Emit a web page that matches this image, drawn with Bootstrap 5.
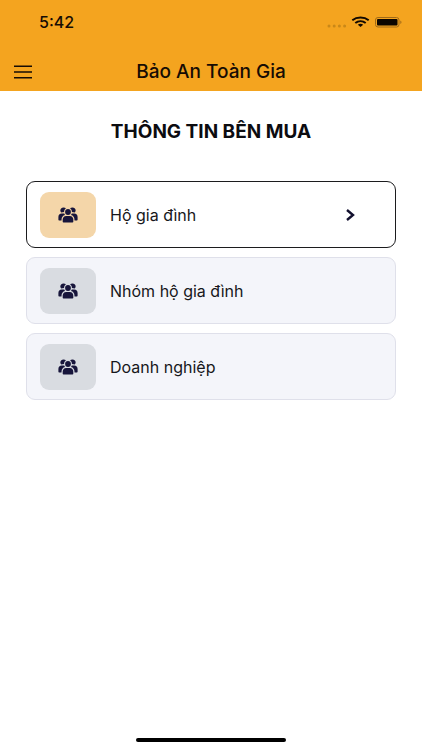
<!DOCTYPE html>
<html lang="vi">
<head>
<meta charset="utf-8">
<meta name="viewport" content="width=device-width, initial-scale=1">
<title>Bảo An Toàn Gia</title>
<link href="https://cdn.jsdelivr.net/npm/bootstrap@5.3.0/dist/css/bootstrap.min.css" rel="stylesheet">
<style>
body { font-family: Inter, "Liberation Sans", sans-serif; color: #0c0c10; background: #fff; }
.app-header { background: #f4a41f; color: #160c04; }
.status-bar { height: 44px; padding: 0 20px 0 39px; }
.status-time { font-size: 16px; line-height: 20px; font-weight: 500; }
.title-bar { display: grid; grid-template-columns: 32px 1fr 32px; height: 47px; padding: 8px 14px 0; }
.app-title { font-size: 19px; line-height: 24px; font-weight: 500; }
.menu-btn { color: #160c04; }
.section-title { font-size: 19px; line-height: 24px; font-weight: 700; margin: 29px 0 37px; }
.choices { padding: 0 26px; gap: 9px; }
.choice { height: 67px; padding: 0 40px 0 13px; gap: 14px; border: 1px solid #dfe0ea; border-radius: 9px; background: #f4f5fa; color: #17171b; font-size: 16px; line-height: 24px; }
.choice.selected { background: #fff; border-color: #1c1c1e; }
.choice-icon { width: 56px; height: 46px; border-radius: 9px; background: #d9dce1; color: #17153b; }
.selected .choice-icon { background: #f4d6a9; }
.home-bar { width: 150px; height: 4px; background: #000; margin-bottom: 8px; }
</style>
<script src="https://cdn.jsdelivr.net/npm/bootstrap@5.3.0/dist/js/bootstrap.bundle.min.js" defer></script>
</head>
<body class="d-flex flex-column min-vh-100">
<svg class="d-none" aria-hidden="true">
  <symbol id="people" viewBox="0 0 20 16">
    <g fill="currentColor">
      <circle cx="10" cy="5" r="2.900"/>
      <path d="M5.800 15.600c-.7 0-1.100-.4-1.100-1.100v-1.700c0-2.300 1.400-3.800 3.500-3.800h3.600c2.100 0 3.500 1.500 3.500 3.800v1.700c0 .7-.4 1.100-1.100 1.100z"/>
      <path d="M8 1.300C6.600.2 4.300.2 3.100 1.500c-1.100 1.200-1 2.900.1 3.900l2.900-.3C6 3.500 6.600 2.200 8 1.300z"/>
      <path d="M12 1.300c1.400-1.100 3.700-1.100 4.900.2 1.100 1.200 1 2.900-.1 3.900l-2.900-.3c.1-1.600-.5-2.900-1.900-3.800z"/>
      <path d="M3.700 6.600h2.500l.8 1.400c-2.200.5-3.500 2.300-3.500 4.900v.5H1.400c-.6 0-1-.4-1-1V9.900c0-2 1.300-3.300 3.300-3.300z"/>
      <path d="M16.300 6.600h-2.500L13 8c2.200.5 3.500 2.300 3.500 4.900v.5h2.100c.6 0 1-.4 1-1V9.900c0-2-1.300-3.300-3.300-3.300z"/>
    </g>
  </symbol>
</svg>
<header class="app-header">
  <div class="status-bar d-flex align-items-center justify-content-between">
    <span class="status-time">5:42</span>
    <svg width="76" height="14" viewBox="0 0 76 14" aria-hidden="true">
      <g fill="#c98818"><circle cx="3" cy="11" r="1.500"/><circle cx="8.200" cy="11" r="1.500"/><circle cx="13.400" cy="11" r="1.500"/><circle cx="18.600" cy="11" r="1.500"/></g>
      <g fill="none" stroke="#120900" stroke-width="2"><path d="M26.300 5.200c4.600-3.600 11.800-3.600 16.400 0"/><path d="M29.300 8c3-2.400 7.400-2.400 10.400 0"/></g>
      <path fill="#120900" d="M31.800 9.800c1.600-1.300 3.800-1.300 5.400 0l-2.700 2.300z"/>
      <rect x="49.500" y="2.500" width="23.500" height="9.500" rx="2.500" fill="none" stroke="#a06a18"/>
      <rect x="51" y="4" width="20.500" height="6.500" rx="1" fill="#0c0600"/>
      <path d="M74.300 5.500c1.600.6 1.600 3 0 3.600z" fill="#a06a18"/>
    </svg>
  </div>
  <div class="title-bar align-items-center">
    <button type="button" class="menu-btn btn border-0 p-0 d-flex align-items-center" aria-label="Menu">
      <svg width="18" height="14" viewBox="0 0 18 14" fill="none" stroke="currentColor" stroke-width="1.500"><path d="M0 1.300h18M0 7h18M0 12.700h18"/></svg>
    </button>
    <h1 class="app-title text-center m-0">Bảo An Toàn Gia</h1>
  </div>
</header>
<main class="flex-grow-1">
  <h2 class="section-title text-center">THÔNG TIN BÊN MUA</h2>
  <div class="choices d-flex flex-column">
    <button type="button" class="choice selected d-flex align-items-center text-start" aria-pressed="true">
      <span class="choice-icon d-flex align-items-center justify-content-center"><svg width="20" height="16" aria-hidden="true"><use href="#people"/></svg></span>
      <span class="flex-grow-1">Hộ gia đình</span>
      <svg width="9" height="12" viewBox="0 0 9 12" fill="none" stroke="#12102e" stroke-width="2.400" aria-hidden="true"><path d="M1 1 7 6 1 11"/></svg>
    </button>
    <button type="button" class="choice d-flex align-items-center text-start" aria-pressed="false">
      <span class="choice-icon d-flex align-items-center justify-content-center"><svg width="20" height="16" aria-hidden="true"><use href="#people"/></svg></span>
      <span>Nhóm hộ gia đình</span>
    </button>
    <button type="button" class="choice d-flex align-items-center text-start" aria-pressed="false">
      <span class="choice-icon d-flex align-items-center justify-content-center"><svg width="20" height="16" aria-hidden="true"><use href="#people"/></svg></span>
      <span>Doanh nghiệp</span>
    </button>
  </div>
</main>
<div class="home-bar rounded-pill mx-auto"></div>
</body>
</html>
